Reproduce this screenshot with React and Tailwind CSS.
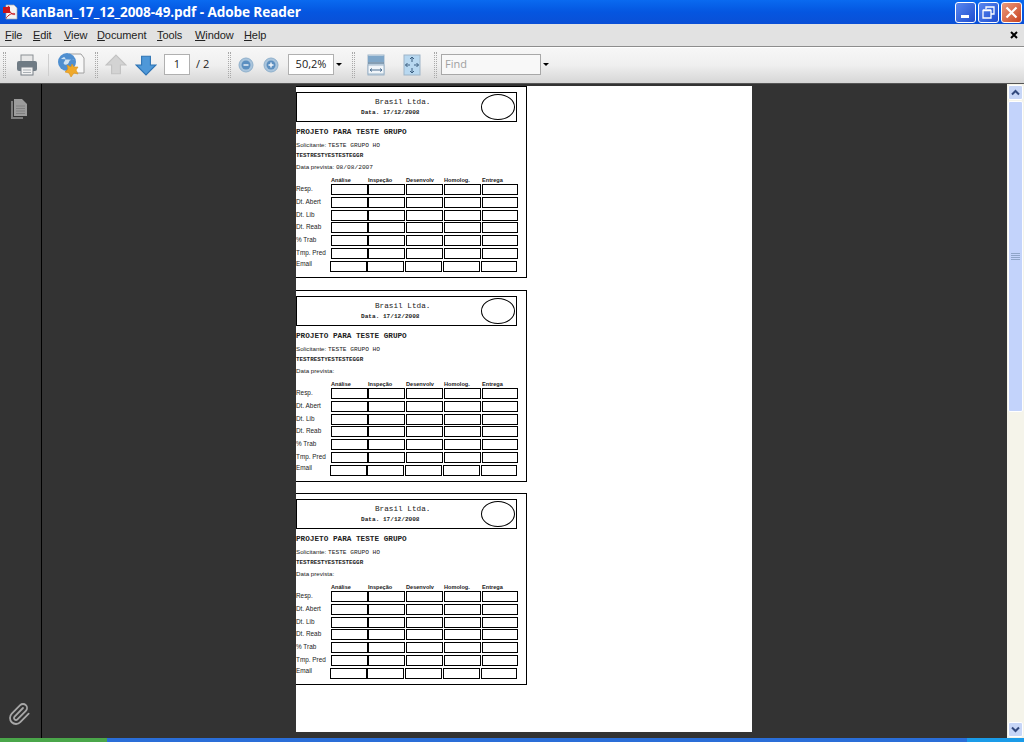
import React from 'react';
import { Paperclip } from 'lucide-react';

const COLUMNS = ['Análise', 'Inspeção', 'Desenvolv', 'Homolog.', 'Entrega'];
const ROWS = ['Resp.', 'Dt. Abert', 'Dt. Lib', 'Dt. Reab', '% Trab', 'Tmp. Pred'];
const CELLS = ['w-[37px]', 'w-[37px]', 'w-[37px] ml-[1px]', 'w-[37px] ml-[1px]', 'w-[36px] ml-[1px]'];
const HEADS = ['w-[37px]', 'w-[38px]', 'w-[38px]', 'w-[38px]', 'w-[36px]'];

const Grip = ({ className }) => (
    <div className={`w-[3px] h-[26px] shrink-0 border-x border-dotted border-[#a9a9a9] ${className}`} />
);

const Arrow = ({ up, color, dark, className }) => (
    <svg width="22" height="22" viewBox="1 1 20 20" className={`shrink-0 ${className}`}>
        <path
            d={up ? 'M11 2 L20 11 H15 V19 H7 V11 H2 Z' : 'M7 3 H15 V11 H20 L11 20 L2 11 H7 Z'}
            fill={color}
            stroke={dark}
            strokeWidth="1"
        />
    </svg>
);

const ZoomBtn = ({ plus, className }) => (
    <svg width="16" height="16" viewBox="0 0 16 16" className={`shrink-0 ${className}`}>
        <circle cx="8" cy="8" r="7" fill="#a9c4dc" stroke="#8fb0cc" />
        <circle cx="8" cy="8" r="4.5" fill="#5c8fc0" />
        <path d={plus ? 'M5.5 8 H10.5 M8 5.5 V10.5' : 'M5.5 8 H10.5'} stroke="#f3f7fb" strokeWidth="1.4" />
    </svg>
);

const Caret = ({ className }) => (
    <div className={`w-0 h-0 shrink-0 border-x-[3px] border-x-transparent border-t-[3px] border-t-black ${className}`} />
);

const Form = ({ date, className = '' }) => (
    <div className={`h-[192px] w-[231px] border-y border-r border-black pt-[5px] ${className}`}>
        <div className="h-[30px] w-[221px] border border-black flex items-center">
            <div className="w-[184px] flex flex-col text-[#222] font-['Liberation_Mono',monospace] whitespace-nowrap">
                <span className="pl-[78px] text-[7.7px] leading-[11px]">Brasil Ltda.</span>
                <span className="pl-[64px] text-[6.1px] leading-[9px] font-bold">Data. 17/12/2008</span>
            </div>
            <div className="w-[34px] h-[26px] rounded-[50%] border border-black" />
        </div>
        <div className="mt-[5px] text-[7.7px] leading-[10px] font-bold text-[#222] font-['Liberation_Mono',monospace]">PROJETO PARA TESTE GRUPO</div>
        <div className="mt-[3px] text-[6.2px] leading-[9px] text-[#222] font-['Liberation_Sans',sans-serif] whitespace-nowrap">
            Solicitante: <span className="font-['Liberation_Mono',monospace]">TESTE GRUPO HO</span>
        </div>
        <div className="mt-[1px] text-[5.9px] leading-[9px] font-bold text-[#222] font-['Liberation_Mono',monospace]">TESTRESTYESTESTEGGR</div>
        <div className="mt-[2px] text-[6.2px] leading-[9px] text-[#222] font-['Liberation_Sans',sans-serif] whitespace-nowrap">
            Data prevista: <span className="font-['Liberation_Mono',monospace]">{date}</span>
        </div>
        <div className="flex ml-[35px] mt-[4px] h-[8px] items-center">
            {COLUMNS.map((c, i) => (
                <div key={c} className={`${HEADS[i]} text-[5.6px] leading-[8px] font-bold text-[#222] font-['Liberation_Sans',sans-serif] whitespace-nowrap`}>{c}</div>
            ))}
        </div>
        {ROWS.map((r) => (
            <div key={r} className="flex h-[12.8px]">
                <div className="w-[35px] text-[6.4px] leading-[9px] text-[#222] font-['Liberation_Sans',sans-serif] whitespace-nowrap">{r}</div>
                <div className="flex">
                    {CELLS.map((w, i) => (
                        <div key={i} className={`${w} h-[11px] border border-black`} />
                    ))}
                </div>
            </div>
        ))}
        <div className="flex h-[11px]">
            <div className="w-[34px] text-[6.4px] leading-[6px] text-[#222] font-['Liberation_Sans',sans-serif]">Email</div>
            <div className="flex">
                {CELLS.map((w, i) => (
                    <div key={i} className={`${w} h-[11px] border border-black`} />
                ))}
            </div>
        </div>
    </div>
);

export default function App() {
    return (
        <div className="w-[1024px] h-[742px] overflow-hidden flex flex-col bg-[#333333] font-['Liberation_Sans',sans-serif]">
            {/* title bar */}
            <div className="h-[24px] shrink-0 flex items-center pl-[3px] pr-[2px] bg-gradient-to-b from-[#0a6af0] via-[#0556e0] to-[#0a4fd6]">
                <svg width="16" height="16" viewBox="0 0 16 16" className="shrink-0">
                    <path d="M3 1 H11 L14 4 V15 H3 Z" fill="#f4f4f4" stroke="#aaa" strokeWidth="0.7" />
                    <path d="M0 3 H7 V9 H0 Z" fill="#c8141c" />
                    <path d="M4 7 C6 3 6 2 5.5 2 C5 2 5 5 8 9 C10 11 12 11 12 10 C12 9 8 9 5 12 C3 14 3 14 4 14" fill="none" stroke="#c8141c" strokeWidth="1" />
                </svg>
                <span className="ml-[2px] text-white text-[13.6px] font-bold font-['Open_Sans',sans-serif] tracking-[-0.1px] whitespace-nowrap">KanBan_17_12_2008-49.pdf - Adobe Reader</span>
                <div className="ml-auto flex gap-[2px]">
                    <div className="w-[21px] h-[21px] rounded-[3px] border border-white bg-gradient-to-br from-[#5a87ef] to-[#1f4ccf] flex items-end pl-[5px] pb-[4px]">
                        <div className="w-[8px] h-[3px] bg-white" />
                    </div>
                    <div className="w-[21px] h-[21px] rounded-[3px] border border-white bg-gradient-to-br from-[#5a87ef] to-[#1f4ccf] flex items-center justify-center">
                        <svg width="13" height="13" viewBox="0 0 13 13">
                            <path d="M4 3 V1 H12 V8 H9 M1 4.5 H9 V12 H1 Z M1 4 H9" fill="none" stroke="#fff" strokeWidth="1.3" />
                        </svg>
                    </div>
                    <div className="w-[21px] h-[21px] rounded-[3px] border border-white bg-gradient-to-br from-[#e99a7c] to-[#c8401c] flex items-center justify-center">
                        <svg width="13" height="13" viewBox="0 0 13 13">
                            <path d="M1.5 1.5 L11.5 11.5 M11.5 1.5 L1.5 11.5" stroke="#fff" strokeWidth="2.2" />
                        </svg>
                    </div>
                </div>
            </div>

            {/* menu bar */}
            <div className="h-[23px] shrink-0 flex items-center bg-[#e2e2e2] pl-[5px] pr-[6px] text-[11px] tracking-[-0.1px] text-[#222] border-b border-[#8d8d8d]">
                <span className="w-[28px]"><u>F</u>ile</span>
                <span className="w-[31px]"><u>E</u>dit</span>
                <span className="w-[33px]"><u>V</u>iew</span>
                <span className="w-[60px]"><u>D</u>ocument</span>
                <span className="w-[38px]"><u>T</u>ools</span>
                <span className="w-[49px]"><u>W</u>indow</span>
                <span><u>H</u>elp</span>
                <svg width="8" height="8" viewBox="0 0 8 8" className="ml-auto">
                    <path d="M1 1 L7 7 M7 1 L1 7" stroke="#000" strokeWidth="2" />
                </svg>
            </div>

            {/* toolbar */}
            <div className="h-[37px] shrink-0 flex items-center pb-[2px] bg-gradient-to-b from-[#f7f7f7] via-[#efefef] to-[#d6d6d6] border-t border-white border-b border-b-[#555] text-[11px] text-[#222] font-['Open_Sans',sans-serif]">
                <Grip className="ml-[3px]" />
                <svg width="24" height="24" viewBox="0 0 24 24" className="ml-[9px] shrink-0">
                    <rect x="6" y="2" width="12" height="7" fill="#e8e8e8" stroke="#8a8f94" />
                    <rect x="2" y="8" width="20" height="10" rx="2" fill="#6f7b84" />
                    <rect x="6" y="14" width="12" height="8" fill="#f2f2f2" stroke="#777f86" />
                    <path d="M8 17 H16 M8 19.5 H16" stroke="#aab0b5" />
                </svg>
                <div className="w-px h-[22px] bg-[#cfcfcf] ml-[9px] shrink-0" />
                <svg width="28" height="28" viewBox="0 0 28 28" className="ml-[8px] shrink-0">
                    <path d="M12 3 H24 L27 7 V22 H12 Z" fill="#f7f7f7" stroke="#a0a0a0" />
                    <circle cx="10" cy="11" r="9" fill="#4f8fd0" />
                    <path d="M4 8 C8 4 10 8 7 11 C5 14 11 15 12 11 C13 8 16 9 18 9" fill="#cfe2f2" />
                    <path d="M15 13 L17 16 L21 16 L19 19 L21 23 L17 22 L14 26 L12 22 L8 21 L11 18 L10 14 L14 16 Z" fill="#f0a92a" stroke="#d9901a" strokeWidth="0.6" />
                </svg>
                <Grip className="ml-[10px]" />
                <Arrow up color="#d3d3d3" dark="#c2c2c2" className="ml-[7px]" />
                <Arrow color="#4f98d8" dark="#2f74b4" className="ml-[8px]" />
                <div className="ml-[7px] w-[26px] h-[21px] shrink-0 bg-white border border-[#b0b0b0] flex items-center justify-center">1</div>
                <span className="ml-[6px] w-[15px] shrink-0 whitespace-nowrap">/ 2</span>
                <Grip className="ml-[17px]" />
                <ZoomBtn className="ml-[7px]" />
                <ZoomBtn plus className="ml-[9px]" />
                <div className="ml-[9px] w-[46px] h-[21px] shrink-0 bg-white border border-[#b0b0b0] flex items-center justify-center">50,2%</div>
                <Caret className="ml-[2px]" />
                <Grip className="ml-[10px]" />
                <svg width="18" height="22" viewBox="0 0 18 22" className="ml-[12px] shrink-0">
                    <rect x="1" y="1" width="16" height="20" fill="#cfe0ee" stroke="#9db4c7" />
                    <rect x="1" y="2" width="16" height="6" fill="#7fa6c8" />
                    <path d="M1 9 H17" stroke="#6d88a0" strokeWidth="1.5" />
                    <rect x="1" y="11" width="16" height="9" fill="#f0f5fa" stroke="#9db4c7" />
                    <path d="M3 16 H15 M3 16 L5 14.5 M3 16 L5 17.5 M15 16 L13 14.5 M15 16 L13 17.5" stroke="#4c6f90" fill="none" />
                </svg>
                <svg width="18" height="22" viewBox="0 0 18 22" className="ml-[18px] shrink-0">
                    <rect x="1" y="1" width="16" height="20" fill="#b8d8f0" stroke="#9db4c7" />
                    <path d="M9 3 V8 M9 14 V19 M2.5 11 H7 M11 11 H15.5 M9 3 L7 5 M9 3 L11 5 M9 19 L7 17 M9 19 L11 17 M2.5 11 L4.5 9 M2.5 11 L4.5 13 M15.5 11 L13.5 9 M15.5 11 L13.5 13" stroke="#3c5f80" fill="none" />
                </svg>
                <Grip className="ml-[13px]" />
                <div className="ml-[4px] w-[100px] h-[21px] shrink-0 bg-[#f8f8f8] border border-[#a8a8a8] flex items-center pl-[3px] text-[#a0a0a0]">Find</div>
                <Caret className="ml-[2px]" />
            </div>

            {/* body */}
            <div className="flex-1 flex min-h-0">
                <div className="w-[41px] shrink-0 flex flex-col items-center justify-between pt-[14px] pb-[12px] pr-[4px]">
                    <svg width="18" height="22" viewBox="0 0 18 22">
                        <path d="M1 3 H3 V19 H13 V21 H1 Z" fill="#7d7d7d" />
                        <path d="M4 1 H12 L17 6 V18 H4 Z" fill="#9c9c9c" />
                        <path d="M6 8 H15 M6 10.5 H15 M6 13 H15 M6 15.5 H15" stroke="#808080" />
                    </svg>
                    <Paperclip size={24} strokeWidth={1.8} className="text-[#a8a8a8]" />
                </div>
                <div className="w-px bg-black shrink-0" />
                <div className="flex-1 pl-[254px] pt-[2px]">
                    <div className="w-[456px] h-[646px] bg-white">
                        <Form date="08/08/2007" />
                        <Form date="" className="mt-[12px]" />
                        <Form date="" className="mt-[11px]" />
                    </div>
                </div>

                {/* scrollbar */}
                <div className="w-[17px] shrink-0 flex flex-col bg-[#f5f4ea] px-[1px] pt-[1px]">
                    <div className="h-[15px] rounded-[2px] bg-[#c7d6f7] border border-white flex items-center justify-center">
                        <svg width="9" height="7" viewBox="0 0 9 7"><path d="M1 5.5 L4.5 2 L8 5.5" fill="none" stroke="#32497e" strokeWidth="2" /></svg>
                    </div>
                    <div className="h-[311px] mt-[1px] rounded-[2px] bg-[#c3d3fb] border border-white flex flex-col items-center justify-center gap-[1px]">
                        <div className="w-[9px] h-px bg-[#8fa5c8]" />
                        <div className="w-[9px] h-px bg-[#8fa5c8]" />
                        <div className="w-[9px] h-px bg-[#8fa5c8]" />
                        <div className="w-[9px] h-px bg-[#8fa5c8]" />
                    </div>
                    <div className="mt-auto mb-[1px] h-[15px] rounded-[2px] bg-[#c7d6f7] border border-white flex items-center justify-center">
                        <svg width="9" height="7" viewBox="0 0 9 7"><path d="M1 1.5 L4.5 5 L8 1.5" fill="none" stroke="#32497e" strokeWidth="2" /></svg>
                    </div>
                </div>
            </div>

            {/* taskbar strip */}
            <div className="h-[4px] shrink-0 flex">
                <div className="w-[107px] bg-[#4aa64a]" />
                <div className="flex-1 bg-[#2a6ed8]" />
                <div className="w-[57px] bg-[#1a9be8]" />
            </div>
        </div>
    );
}
